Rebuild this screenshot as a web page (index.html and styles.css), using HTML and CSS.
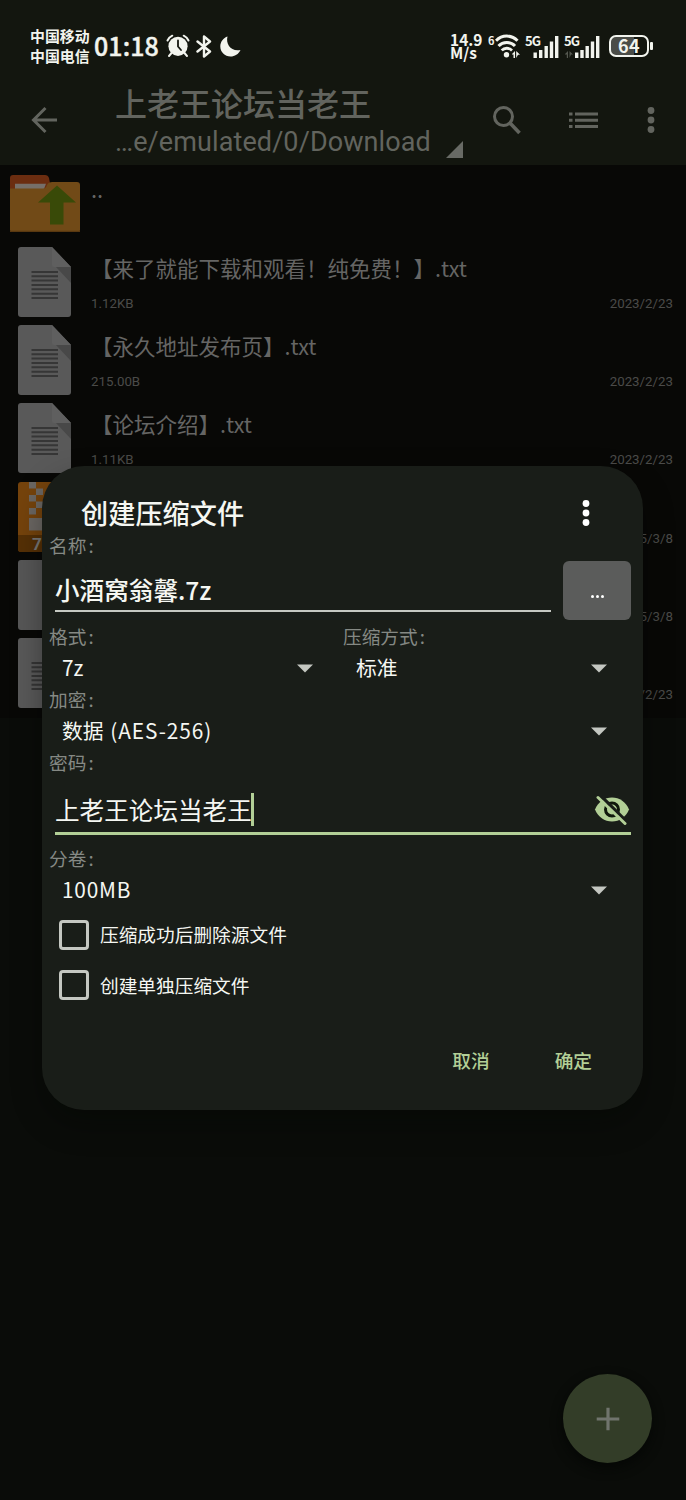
FILE: index.html
```html
<!DOCTYPE html>
<html lang="zh-CN">
<head>
<meta charset="utf-8">
<title>创建压缩文件</title>
<link rel="stylesheet" href="styles.css">
</head>
<body>
<svg width="0" height="0" class="defs">
  <symbol id="doc" viewBox="0 0 53 70">
    <path d="M3 0H34L53 20V67a3 3 0 0 1-3 3H3a3 3 0 0 1-3-3V3a3 3 0 0 1 3-3z" fill="#595959"/>
    <path d="M38 20H53V36z" fill="#484848"/>
    <path d="M34 0L53 20H36a2 2 0 0 1-2-2z" fill="#5f5f5f"/>
    <path d="M13.500 25H40M13.500 29.300H40M13.500 33.600H40M13.500 38H40M13.500 42.300H40M13.500 46.700H40M13.500 51H40" stroke="#363636" stroke-width="2"/>
  </symbol>
  <symbol id="more" viewBox="0 0 8 28">
    <circle cx="4" cy="4.500" r="3.400"/><circle cx="4" cy="14" r="3.400"/><circle cx="4" cy="23.500" r="3.400"/>
  </symbol>
  <symbol id="caret" viewBox="0 0 16 9"><path d="M0 .5H16L8 8.500z"/></symbol>
</svg>
<div class="screen">
  <header class="status">
    <div class="carriers"><span>中国移动</span><span>中国电信</span></div>
    <span class="clock">01:18</span>
    <svg class="alarm" width="24" height="24" viewBox="0 0 24 24">
      <circle cx="12" cy="12.300" r="9.600" fill="#f2f4ee"/>
      <path d="M1.500 6.500A10 10 0 0 1 6.300 1.700M17.700 1.700A10 10 0 0 1 22.500 6.500M5.500 19L3 22M18.500 19L21 22" stroke="#f2f4ee" stroke-width="2" fill="none" stroke-linecap="round"/>
      <path d="M12 6.500V12.500L15 16" stroke="#13160f" stroke-width="1.800" fill="none" stroke-linecap="round"/>
    </svg>
    <svg class="bt" width="16" height="23" viewBox="0 0 16 23">
      <path d="M1.500 6.500L14 16.500L8 21.500V1.500L14 6.500L1.500 16.500" stroke="#f2f4ee" stroke-width="2.400" fill="none" stroke-linejoin="round" stroke-linecap="round"/>
    </svg>
    <svg class="moon" width="21" height="21" viewBox="0 0 21 21">
      <path d="M7.500 .5C5.500 8 11 16 20.500 14C18.500 18.200 14.800 20.500 10.500 20.500C4.800 20.500 .3 16 .3 10.500C.3 5.800 3.500 1.800 7.500 .5z" fill="#f2f4ee"/>
    </svg>
    <div class="speed"><span>14.9</span><span>M/s</span></div>
    <span class="gen">6</span>
    <svg class="wifi" width="25" height="26" viewBox="5 0 25 26">
      <g fill="none" stroke="#f2f4ee" stroke-linecap="butt" stroke-width="3">
        <path d="M6 7.800C12 1.500 21.500 1.500 27.500 7.800"/><path d="M8.500 13C13 8.300 20.500 8.300 25 13"/><path d="M11.700 17.400C14.500 14.500 19 14.500 22 17.400" stroke-width="2.800"/>
      </g>
      <circle cx="16.500" cy="21.800" r="2.700" fill="#f2f4ee"/>
      <path d="M22 21L25 18V25H23.500V21.500H22zM26.200 18L30 21.800H28L26.200 25z" fill="#f2f4ee"/>
    </svg>
    <div class="cell">
      <span>5G</span>
      <svg width="34" height="25" viewBox="0 0 34 25"><path d="M8.500 18.500h3.400v5.500h-3.400zM14 16h3.400v8h-3.400zM19.500 12h3.400v12h-3.400zM24.800 7.500h3.400V24h-3.400zM30 2h3.400v22H30z" fill="#f2f4ee"/></svg>
    </div>
    <div class="cell wide">
      <span>5G</span>
      <svg width="36" height="25" viewBox="0 0 36 25"><path d="M11 18.500h3.400v5.500H11zM16.300 16h3.400v8h-3.400zM21.500 12h3.400v12h-3.400zM26.800 7.500h3.400V24h-3.400zM32 2h3.400v22H32z" fill="#f2f4ee"/><path d="M1 20L4 17V24H2.800V20.500H1zM5.500 17L9 20.500H7L5.500 24z" fill="#555850"/></svg>
    </div>
    <div class="battery"><span>64</span></div>
  </header>
  <nav class="toolbar">
    <svg class="back" width="28" height="28" viewBox="0 0 28 28"><path d="M27 14H4M15.500 2L3.500 14L15.500 26" fill="none" stroke="#62645e" stroke-width="3"/></svg>
    <div class="heading">
      <div class="h1">上老王论坛当老王</div>
      <div class="path">…e/emulated/0/Download</div>
    </div>
    <svg class="corner" width="17" height="17" viewBox="0 0 17 17"><path d="M0 17L17 0V17z" fill="#686a65"/></svg>
    <svg class="search" width="28" height="29" viewBox="0 0 28 29"><circle cx="10.500" cy="10.500" r="9" fill="none" stroke="#62645e" stroke-width="3"/><path d="M17 17L26.500 27" stroke="#62645e" stroke-width="3.600"/></svg>
    <svg class="list" width="29" height="18" viewBox="0 0 29 18"><path d="M0 3h3.500M6 3h23M0 9.300h3.500M6 9.300h23M0 15.600h3.500M6 15.600h23" stroke="#62645e" stroke-width="3"/></svg>
    <svg class="kebab" width="8" height="28" fill="#62645e"><use href="#more"/></svg>
  </nav>
  <main class="files">
    <div class="row up">
      <svg class="folder" width="70" height="58" viewBox="0 0 70 58">
        <path d="M3 0H35Q38 0 39 3L41 14H0V3Q0 0 3 0z" fill="#6b2d10"/>
        <path d="M5 8.700H36L34 14H5z" fill="#766f69"/>
        <path d="M0 13.500H33Q36 13.500 37 10L38 8.500Q39 7 42 7H67Q70 7 70 10V55Q70 57 68 57H2Q0 57 0 55z" fill="#714a17"/>
        <path d="M0 56.300H70" stroke="#593810" stroke-width="1.200"/>
        <path d="M47 10.500L66 27.500H53.500V49.500H40V27.500H28z" fill="#394a08"/>
      </svg>
      <span class="dots">..</span>
    </div>
    <div class="row"><svg class="ic"><use href="#doc"/></svg><div class="info"><b>【来了就能下载和观看！纯免费！】.txt</b><p><span>1.12KB</span><span>2023/2/23</span></p></div></div>
    <div class="row"><svg class="ic"><use href="#doc"/></svg><div class="info"><b>【永久地址发布页】.txt</b><p><span>215.00B</span><span>2023/2/23</span></p></div></div>
    <div class="row"><svg class="ic"><use href="#doc"/></svg><div class="info"><b>【论坛介绍】.txt</b><p><span>1.11KB</span><span>2023/2/23</span></p></div></div>
    <div class="row">
      <svg class="ic" viewBox="0 0 53 70">
        <rect width="53" height="70" rx="3" fill="#75430c"/><path d="M0 53H53V67a3 3 0 0 1-3 3H3a3 3 0 0 1-3-3z" fill="#553006"/>
        <path d="M11 0h7v6.500h-7zM18 6.500h7V13h-7zM11 13h7v6.500h-7zM18 19.500h7V26h-7zM11 26h7v6.500h-7zM11 36h14v12.500H11z" fill="#6b6763"/>
        <text x="14" y="67.500" class="seven">7z</text>
      </svg>
      <div class="info"><b></b><p><span></span><span>2025/3/8</span></p></div>
    </div>
    <div class="row"><svg class="ic" viewBox="0 0 53 70"><rect width="53" height="70" rx="3" fill="#575757"/></svg><div class="info"><b></b><p><span></span><span>2025/3/8</span></p></div></div>
    <div class="row"><svg class="ic"><use href="#doc"/></svg><div class="info"><b></b><p><span></span><span>2023/2/23</span></p></div></div>
  </main>
  <div class="fab"><svg width="24" height="24" viewBox="0 0 24 24"><path d="M12 .7V23.300M.7 12H23.300" stroke="#70746d" stroke-width="3.200"/></svg></div>

  <section class="dialog">
    <div class="dtitle"><h2>创建压缩文件</h2><svg width="8" height="28" fill="#fff"><use href="#more"/></svg></div>
    <div class="label">名称<i>:</i></div>
    <div class="name"><div class="field">小酒窝翁馨.7z</div><div class="browse"><i></i><i></i><i></i></div></div>
    <div class="cols">
      <div><div class="label">格式<i>:</i></div><div class="select"><span>7z</span><svg class="caret"><use href="#caret"/></svg></div></div>
      <div><div class="label">压缩方式<i>:</i></div><div class="select"><span>标准</span><svg class="caret"><use href="#caret"/></svg></div></div>
    </div>
    <div class="label">加密<i>:</i></div>
    <div class="select"><span>数据 <em>(AES-256)</em></span><svg class="caret"><use href="#caret"/></svg></div>
    <div class="label">密码<i>:</i></div>
    <div class="pass"><span>上老王论坛当老王</span><i class="cursor"></i>
      <svg class="eye" width="36" height="30" viewBox="0 0 36 30">
        <path d="M1 14.500C4 7 10.500 2.500 18 2.500S32 7 35 14.500C32 22 25.500 26.500 18 26.500S4 22 1 14.500z" fill="#b2cf96"/>
        <circle cx="18" cy="14.500" r="6.500" fill="#b2cf96" stroke="#10180c" stroke-width="3"/>
        <path d="M5 -1L34 28" stroke="#191d18" stroke-width="3.200"/>
        <path d="M4 2.500L31 28.500" stroke="#b2cf96" stroke-width="3" stroke-linecap="round"/>
      </svg>
    </div>
    <div class="label">分卷<i>:</i></div>
    <div class="select"><span class="vol">100MB</span><svg class="caret"><use href="#caret"/></svg></div>
    <div class="check"><i></i><span>压缩成功后删除源文件</span></div>
    <div class="check"><i></i><span>创建单独压缩文件</span></div>
    <div class="actions"><span>取消</span><span>确定</span></div>
  </section>
</div>
</body>
</html>
```
FILE: styles.css
```css
* { box-sizing: border-box; margin: 0; padding: 0; }
body { background: #0a0c09; font-family: "Noto Sans CJK SC", sans-serif; }
svg { display: block; flex: none; }
.defs { position: absolute; }
.screen { position: relative; width: 686px; height: 1500px; overflow: hidden; background: #0a0c09; white-space: nowrap; }

.status { display: flex; align-items: center; height: 76px; padding: 16px 0 0 30px; background: #13160f; color: #f2f4ee; }
.carriers { width: 64px; font-size: 14.9px; font-weight: 700; line-height: 20px; }
.carriers span { display: block; }
.clock { width: 72px; font: 500 25px/28px "Noto Sans CJK SC", sans-serif; letter-spacing: .1px; padding-bottom: 2px; -webkit-text-stroke: .4px #f2f4ee; }
.bt { margin-left: 6px; }
.moon { margin-left: 8px; }
.speed { margin-left: auto; width: 38px; padding-bottom: 1px; font: 700 15.500px/13px "Noto Sans CJK SC", sans-serif; }
.speed span { display: block; }
.gen { width: 7px; padding-bottom: 12px; font-size: 11px; font-weight: 700; line-height: 14px; }
.wifi { margin-right: 5px; }
.cell { display: grid; width: 39px; height: 25px; }
.cell > * { grid-area: 1 / 1; }
.cell span { font-size: 13px; font-weight: 700; line-height: 14px; letter-spacing: -.8px; }
.cell.wide { width: 45px; }
.battery { position: relative; width: 40px; height: 22px; margin-right: 37px; border: 2px solid #f2f4ee; border-radius: 7px; background: linear-gradient(90deg, #4b4d48 64%, #13160f 64%); font: 700 18px/17px "Noto Sans CJK SC", sans-serif; text-align: center; letter-spacing: .5px; }
.battery::after { content: ""; position: absolute; right: -6px; top: 5px; width: 3px; height: 8px; border-radius: 1px; background: #f2f4ee; }

.toolbar { display: flex; align-items: center; height: 89px; padding: 0 0 1px 30px; background: #13160f; color: #62645e; }
.heading { width: 330px; margin-left: 57px; }
.h1 { font-size: 32px; font-weight: 500; line-height: 38px; }
.path { font: 400 27px/32px Roboto, sans-serif; letter-spacing: .1px; padding-top: 5px; }
.corner { align-self: flex-end; margin: 0 0 6px 1px; }
.search { margin-left: 30px; }
.list { margin-left: 48px; }
.kebab { margin-left: 49px; }

.files { height: 553px; background: #080806; color: #656564; }
.row { display: flex; height: 78.200px; padding: 4px 13px 0 18px; }
.up { padding: 10px 0 0 10px; height: 78px; }
.dots { margin: -2px 0 0 11px; font-size: 22px; line-height: 30px; }
.ic { width: 53px; height: 70px; margin-right: 20px; }
.info { flex: 1; }
.info b { display: block; height: 42px; font-size: 21.500px; line-height: 42px; font-weight: 400; }
.info p { display: flex; justify-content: space-between; font: 400 13.300px/20px Roboto, sans-serif; color: #4b4b49; margin-top: 5px; }
.seven { font: 700 17px Roboto, sans-serif; fill: #777; }

.fab { position: absolute; left: 563px; top: 1374px; width: 89px; height: 89px; border-radius: 50%; background: #333d28; display: flex; align-items: center; justify-content: center; box-shadow: 0 5px 12px #050705; }

.dialog { position: absolute; left: 42px; top: 466px; width: 601px; height: 644px; padding-top: 26px; border-radius: 42px; background: #191d18; color: #f5f7f2; box-shadow: 0 14px 30px rgba(4, 5, 3, .35); }
.dtitle { display: flex; height: 42px; align-items: center; padding: 0 53px 0 39px; }
.dtitle h2 { flex: 1; font-size: 27.200px; font-weight: 500; line-height: 38px; padding-bottom: 2px; }
.label { height: 23px; padding-left: 7px; font-size: 18.700px; line-height: 21px; color: #858984; }
.label i { font-style: normal; margin-left: 2px; }
.name { display: flex; height: 68px; padding: 4px 12px 0 13px; }
.field { width: 496px; height: 50px; margin-top: 1px; margin-right: 12px; font-size: 24.600px; line-height: 54px; border-bottom: 2px solid #c5c8c2; font-weight: 500; }
.browse { display: flex; width: 68px; height: 59px; border-radius: 6px; background: #5b5c5b; align-items: center; justify-content: center; gap: 2px; padding-top: 11px; }
.browse i { width: 3px; height: 3px; border-radius: 50%; background: #fff; }
.cols { display: grid; grid-template-columns: 294px 307px; }
.cols > div:first-child .select { padding-right: 23px; }
.select { display: flex; height: 40px; align-items: center; justify-content: space-between; padding: 0 36px 0 20px; font-size: 20.800px; line-height: 35px; }
.select span { padding-bottom: 1px; }
.select em { font-style: normal; letter-spacing: .95px; margin-left: 2px; }
.vol { letter-spacing: .8px; }
.caret { width: 16px; height: 9px; fill: #c4c7c1; }
.pass { display: flex; align-items: center; width: 576px; height: 61px; margin: 0 0 12px 13px; padding-top: 13px; border-bottom: 3px solid #b2cf96; font-size: 24.600px; line-height: 34px; }
.pass span { padding-bottom: 2px; }
.cursor { width: 3px; height: 33px; background: #b2cf96; margin-left: -1px; }
.eye { margin-left: auto; margin-right: 1px; }
.check { display: flex; height: 50.500px; align-items: center; padding-left: 17px; font-size: 18.700px; line-height: 28px; }
.check i { width: 30px; height: 30px; border: 3px solid #c4c7c1; border-radius: 4px; margin: 0 11px 1px 0; }
.check span { padding-bottom: 2px; }
.actions { display: flex; justify-content: flex-end; gap: 65px; margin-top: 35px; padding-right: 51px; font-size: 18.700px; font-weight: 500; line-height: 28px; color: #b2cf96; }
```
